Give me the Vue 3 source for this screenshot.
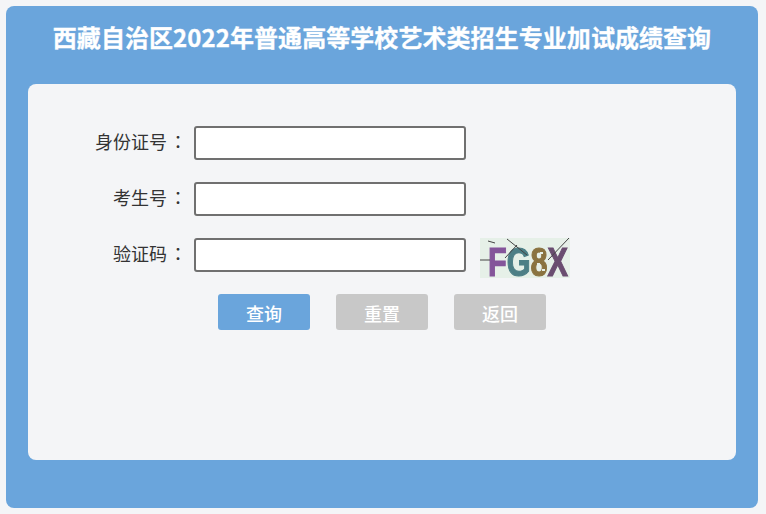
<script setup>
const fields = [
  { label: '身份证号', captcha: false },
  { label: '考生号', captcha: false },
  { label: '验证码', captcha: true }
]
const buttons = [
  { text: '查询', primary: true },
  { text: '重置', primary: false },
  { text: '返回', primary: false }
]
</script>

<template>
  <div class="page">
    <div class="panel">
      <h1 class="title">西藏自治区2022年普通高等学校艺术类招生专业加试成绩查询</h1>
      <div class="card">
        <form class="form" @submit.prevent>
          <div v-for="f in fields" :key="f.label" class="row">
            <label class="label">{{ f.label }}<span class="colon">：</span></label>
            <input class="input" type="text" />
            <svg v-if="f.captcha" class="captcha" width="90" height="40" viewBox="0 0 90 40">
              <rect width="90" height="40" fill="#e6f0e8" />
              <text x="8" y="38" class="ch" textLength="80" lengthAdjust="spacingAndGlyphs"><tspan fill="#84559a" stroke="#84559a">F</tspan><tspan fill="#4d7f86" stroke="#4d7f86">G</tspan><tspan fill="#8a7340" stroke="#8a7340">8</tspan><tspan fill="#6a4d70" stroke="#6a4d70">X</tspan></text>
              <path d="M0 22L10 22M8 3L15 5M27 1L47 17M25 20L37 7M68 22L89 0" stroke="#444" stroke-width="1" fill="none" />
              <path d="M60 15h3M57 26h3M62 32h3" stroke="#e6f0e8" stroke-width="2" fill="none" />
            </svg>
          </div>
          <div class="actions">
            <button
              v-for="b in buttons"
              :key="b.text"
              class="btn"
              :class="{ primary: b.primary }"
              type="button"
            ><span class="btn-text">{{ b.text }}</span></button>
          </div>
        </form>
      </div>
    </div>
  </div>
</template>

<style>
html, body {
  margin: 0;
  background: #f4f5f7;
}
</style>

<style scoped>
.page {
  box-sizing: border-box;
  width: 766px;
  height: 514px;
  padding: 6px 8px 6px 6px;
  font-family: "Noto Sans CJK SC", "Liberation Sans", sans-serif;
}

.panel {
  box-sizing: border-box;
  height: 502px;
  padding: 0 22px 48px;
  background: #6aa5dc;
  border-radius: 8px;
  display: flex;
  flex-direction: column;
}

.title {
  margin: 0;
  height: 78px;
  line-height: 61px;
  font-size: 24px;
  font-weight: 700;
  letter-spacing: 0.06px;
  -webkit-text-stroke: 0.3px #fff;
  color: #fff;
  text-align: center;
  white-space: nowrap;
}

.card {
  flex: 1;
  background: #f4f5f7;
  border-radius: 8px;
}

.form {
  padding-top: 42px;
}

.row {
  display: flex;
  align-items: center;
  height: 34px;
  margin-bottom: 22px;
}

.label {
  box-sizing: border-box;
  width: 166px;
  padding: 0 7px 4px 0;
  text-align: right;
  font-size: 18px;
  color: #333;
  white-space: nowrap;
}

.colon {
  margin-left: 2px;
  font-family: "Noto Sans CJK TC", sans-serif;
}

.input {
  box-sizing: border-box;
  width: 272px;
  height: 34px;
  margin: 0;
  background: #fff;
  border: 2px solid #707070;
  border-radius: 3px;
  outline: none;
}

.captcha {
  align-self: flex-start;
  margin-left: 14px;
  display: block;
  overflow: visible;
  filter: blur(0.4px);
}

.ch {
  font-family: "Liberation Sans", sans-serif;
  font-size: 40px;
  font-weight: 700;
  stroke-width: 1.2px;
}

.actions {
  display: flex;
  gap: 26px;
  padding-left: 190px;
}

.btn {
  width: 92px;
  height: 36px;
  padding: 2px 0 0;
  border: none;
  border-radius: 3px;
  background: #c8c8c8;
  color: #fff;
  font-family: inherit;
  font-size: 18px;
  font-weight: 500;
}

.btn.primary {
  background: #6aa5dc;
}
</style>
